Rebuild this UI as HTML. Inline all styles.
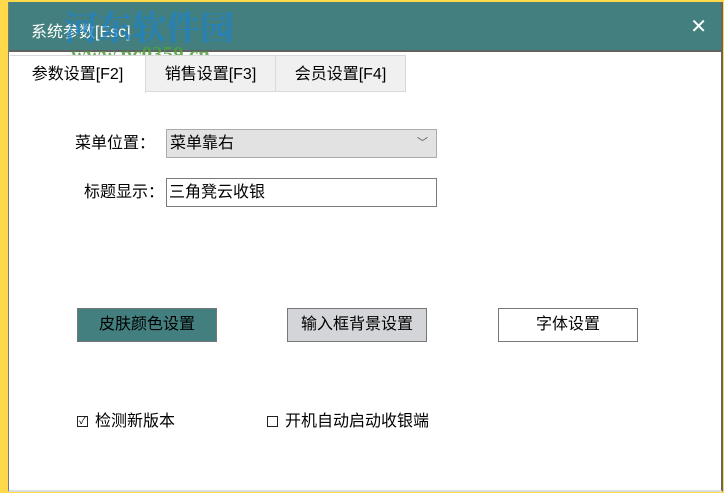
<!DOCTYPE html>
<html><head><meta charset="utf-8"><style>
*{margin:0;padding:0;box-sizing:border-box}
body{width:724px;height:493px;background:#ffd94a;position:relative;overflow:hidden;font-family:"Liberation Sans","Noto Sans CJK SC",sans-serif;font-size:16px;color:#000}
.win{position:absolute;left:8px;top:2px;width:715px;height:490px;background:#fff;border-left:1px solid #777;border-right:2px solid #666;border-bottom:2px solid #ddd}
.title{position:absolute;left:0;top:0;right:0;height:50px;background:#437f7e;border-bottom:2px solid #616161}
.tt{position:absolute;left:22px;top:16px;color:#fff;font-size:16px}
.x{position:absolute;right:14px;top:12px;color:#fff;font-size:20px}
.tab{position:absolute;top:53px;height:37px;background:#f0f0f0;border:1px solid #d9d9d9;text-align:center;line-height:37px;font-size:16px}
.abs{position:absolute;line-height:20px}
.btn{position:absolute;top:306px;height:34px;width:140px;border:1px solid #777;text-align:center;line-height:32px;font-size:16px}
.wm{position:absolute;color:rgba(30,130,200,.75);font-size:34px;line-height:40px;font-weight:bold;left:55px;top:4px;font-family:"Noto Serif CJK SC",serif;white-space:nowrap}
.url{position:absolute;color:rgba(80,160,60,.85);font-size:21px;line-height:24px;font-weight:bold;left:62px;top:40px;font-family:"Liberation Serif",serif;white-space:nowrap}
.cb{position:absolute;width:11px;height:11px;border:1px solid #222;top:414px}
</style></head><body>
<div class="win">
 <div class="title"><div class="tt">系统参数[Esc]</div><div class="x">✕</div></div>
 <div class="wm">河东软件园</div>
 <div class="url">www.pc0359.cn</div>
 <div class="tab" style="left:1px;width:136px;background:#fff;border-bottom:none;border-left:none;height:38px">参数设置[F2]</div>
 <div class="tab" style="left:136px;width:131px">销售设置[F3]</div>
 <div class="tab" style="left:266px;width:131px">会员设置[F4]</div>
 <div class="abs" style="left:66px;top:132px">菜单位置：</div>
 <div class="abs" style="left:157px;top:127px;width:271px;height:29px;background:#e2e2e2;border:1px solid #ababab;padding-left:3px;line-height:27px">菜单靠右<span style="position:absolute;right:8px;top:0;font-size:11px;color:#555">﹀</span></div>
 <div class="abs" style="left:75px;top:181px">标题显示：</div>
 <div class="abs" style="left:157px;top:176px;width:271px;height:29px;background:#fff;border:1px solid #7a7a7a;padding-left:2px;line-height:27px">三角凳云收银</div>
 <div class="btn" style="left:68px;background:#437f7e">皮肤颜色设置</div>
 <div class="btn" style="left:278px;background:#d4d5d9">输入框背景设置</div>
 <div class="btn" style="left:489px;background:#fff">字体设置</div>
 <div class="cb" style="left:68px;font-size:10px;line-height:9px;text-align:center">✓</div>
 <div class="abs" style="left:86px;top:410px">检测新版本</div>
 <div class="cb" style="left:258px"></div>
 <div class="abs" style="left:276px;top:410px">开机自动启动收银端</div>
</div>
</body></html>
